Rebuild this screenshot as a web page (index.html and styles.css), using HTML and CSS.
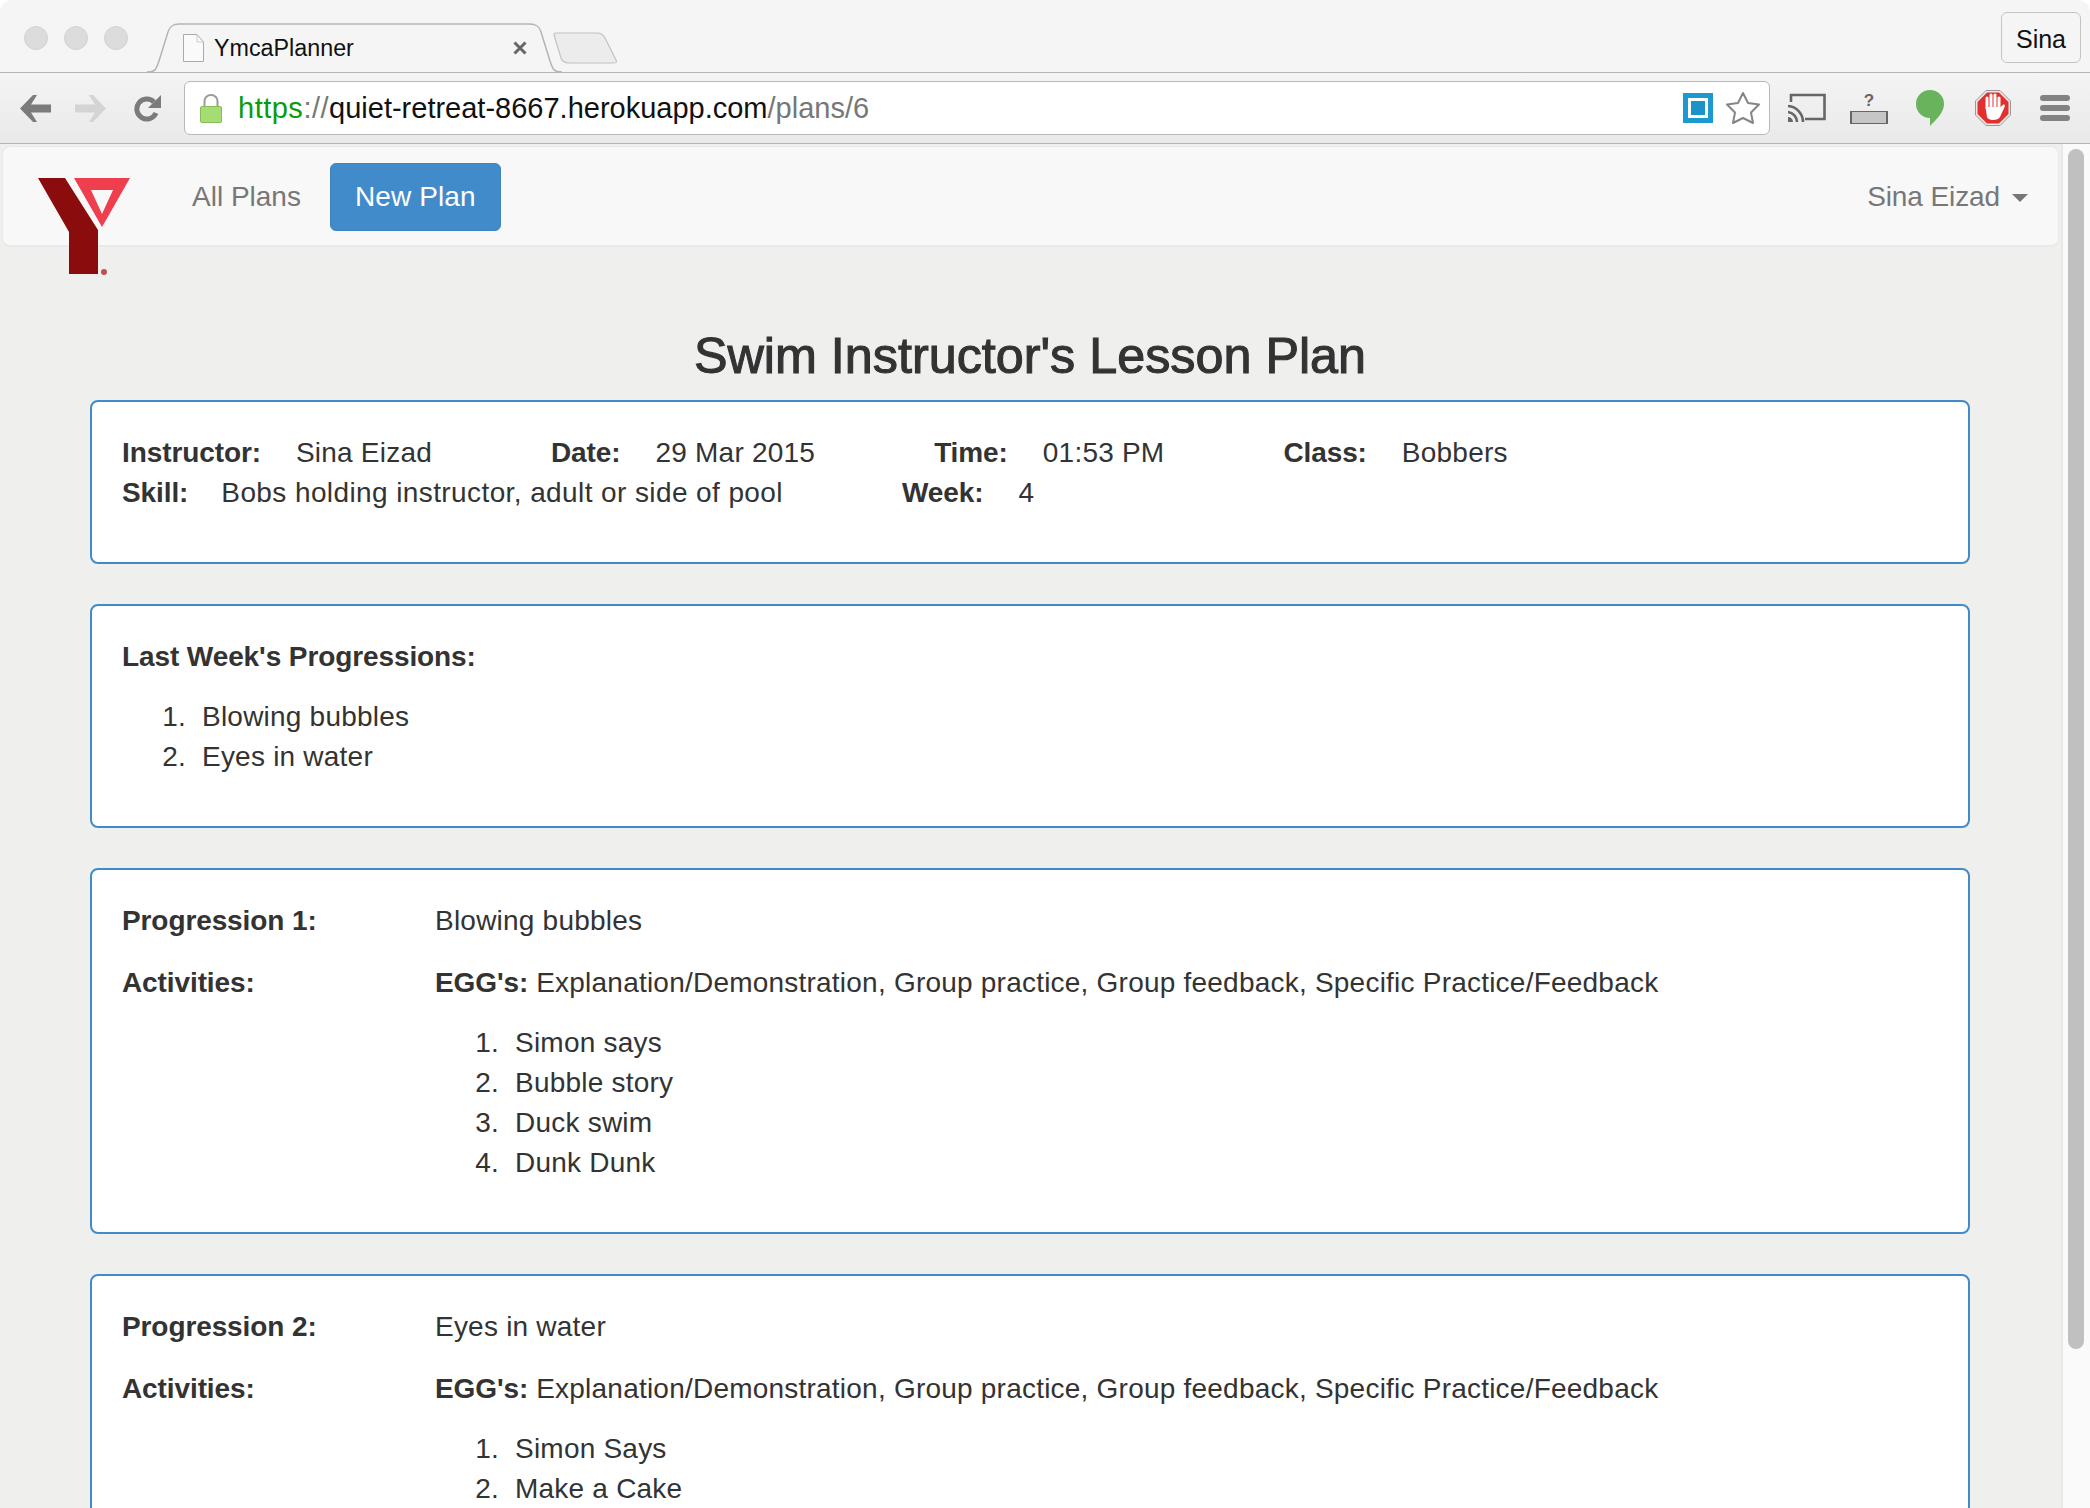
FILE: index.html
```html
<!DOCTYPE html>
<html lang="en">
<head>
  <meta charset="UTF-8" />
  <title>YmcaPlanner</title>
  <link rel="stylesheet" href="styles.css">
</head>
<body>

<div class="window">
  <div class="tabstrip">
    <div class="lights"><span></span><span></span><span></span></div>
    <div class="tab">
      <svg class="tab-shape" viewBox="0 0 415 50" width="415" height="50">
        <path d="M0 49 C8 49 9 47 12 38 L21 9 C23 3 26 1 32 1 H383 C389 1 392 3 394 9 L403 38 C406 47 407 49 415 49" fill="#f5f5f5" stroke="#b4b4b4" stroke-width="1.5"/>
      </svg>
      <svg class="file-icon" viewBox="0 0 21 28" width="21" height="28">
        <path d="M.5.5 H14 L20.5 8 V27.5 H.5 Z" fill="#fafafa" stroke="#aaa"/>
        <path d="M14 .5 V8 H20.5" fill="none" stroke="#ccc"/>
      </svg>
      <span class="tab-title">YmcaPlanner</span>
      <svg class="tab-close" viewBox="0 0 14 14" width="14" height="14">
        <path d="M1.5 1.5 L12.5 12.5 M12.5 1.5 L1.5 12.5" stroke="#666" stroke-width="3"/>
      </svg>
    </div>
    <svg class="new-tab" viewBox="0 0 64 32" width="64" height="32">
      <path d="M1 3 C1 1 2 1 4 1 H44 C48 1 50 2 52 6 L63 28 C64 31 63 31 60 31 H16 C11 31 9 29 8 26 Z" fill="#ececec" stroke="#c2c2c2" stroke-width="1.2"/>
    </svg>
    <div class="profile">Sina</div>
  </div>

  <div class="toolbar">
    <svg class="tool-back" viewBox="0 0 31 27" width="31" height="27">
      <path d="M0 13.5 L13 0 H17 L11 9.5 H31 V17.5 H11 L17 27 H13 Z" fill="#7b7b7b"/>
    </svg>
    <svg class="tool-forward" viewBox="0 0 31 27" width="31" height="27">
      <path d="M31 13.5 L18 0 H14 L20 9.5 H0 V17.5 H20 L14 27 H18 Z" fill="#d4d4d4"/>
    </svg>
    <svg class="tool-reload" viewBox="0 0 27 28" width="27" height="28">
      <path d="M20 8 A10 10 0 1 0 22 19" fill="none" stroke="#7b7b7b" stroke-width="5"/>
      <path d="M27 1 V14 H14 Z" fill="#7b7b7b"/>
    </svg>
    <div class="omnibox">
      <svg class="lock" viewBox="0 0 22 29" width="22" height="29">
        <path d="M4.5 13 V7 A6.5 6 0 0 1 17.5 7 V13" fill="none" stroke="#9a9a9a" stroke-width="2"/>
        <rect x=".5" y="12.5" width="21" height="16" rx="1.5" fill="#a6dc74" stroke="#86bd58"/>
      </svg>
      <div class="url"><span class="url-scheme">https</span><span class="url-dim url-sep">://</span>quiet-retreat-8667.herokuapp.com<span class="url-dim">/plans/6</span></div>
      <div class="ext-square"><span></span></div>
      <svg class="star" viewBox="0 0 36 34" width="36" height="34">
        <path d="M18 2 L23 12 L34 13.5 L26 21.5 L28 32 L18 27 L8 32 L10 21.5 L2 13.5 L13 12 Z" fill="#fff" stroke="#858585" stroke-width="2" stroke-linejoin="round"/>
      </svg>
    </div>
    <svg class="tool-cast" viewBox="0 0 38 30" width="38" height="30">
      <path d="M3 9 V2 H36.5 V26 H17" fill="none" stroke="#666" stroke-width="2.6"/>
      <path d="M0 13 A16 16 0 0 1 15 29 M0 19 A10 10 0 0 1 9 29" fill="none" stroke="#666" stroke-width="2.6"/>
      <path d="M0 24 A5 5 0 0 1 5 29 H0 Z" fill="#666"/>
    </svg>
    <div class="tool-bar-icon">
      <span class="q-mark">?</span>
      <span class="q-bar"></span>
    </div>
    <svg class="tool-bubble" viewBox="0 0 28 36" width="28" height="36">
      <path d="M14 0 A14 14 0 0 1 28 14 C28 22 21 29 14 36 V28 A14 14 0 0 1 14 0 Z" fill="#69b35c"/>
    </svg>
    <svg class="tool-stop" viewBox="0 0 36 36" width="36" height="36">
      <path d="M11 .5 H25 L35.5 11 V25 L25 35.5 H11 L.5 25 V11 Z" fill="#e8e8e8" stroke="#999"/>
      <path d="M12 2.5 H24 L33.5 12 V24 L24 33.5 H12 L2.5 24 V12 Z" fill="#e4302c"/>
      <path d="M12 18 V8 M16 18 V5 M20 18 V5 M24 18 V8" stroke="#fff" stroke-width="3" stroke-linecap="round"/>
      <path d="M10.5 17 H25.5 L29 14 L30 16 L25 27 C23 31 13 31 12 27 Z" fill="#fff"/>
    </svg>
    <div class="tool-menu"><span></span><span></span><span></span></div>
  </div>

  <div class="viewport">
    <div class="page">
      <nav class="navbar">
        <svg class="logo" viewBox="0 0 92 98" width="92" height="98">
          <path d="M0 0 H27 L60 52 V96 H31 V54 Z" fill="#8b0c0c"/>
          <path d="M36 0 H92 L64 49 Z M53 12 L64 36 L75 12 Z" fill="#ef3e4e" fill-rule="evenodd"/>
          <circle cx="66" cy="94" r="3" fill="#c05050"/>
        </svg>
        <a class="nav-link">All Plans</a>
        <a class="nav-btn">New Plan</a>
        <a class="nav-user">Sina Eizad<span class="caret"></span></a>
      </nav>

      <h3 class="page-title">Swim Instructor's Lesson Plan</h3>

      <section class="panel">
        <p class="info">
          <span class="field"><b>Instructor:</b><span>Sina Eizad</span></span>
          <span class="field"><b>Date:</b><span>29 Mar 2015</span></span>
          <span class="field"><b>Time:</b><span>01:53 PM</span></span>
          <span class="field"><b>Class:</b><span>Bobbers</span></span>
          <br>
          <span class="field field-skill"><b>Skill:</b><span>Bobs holding instructor, adult or side of pool</span></span>
          <span class="field"><b>Week:</b><span>4</span></span>
        </p>
      </section>

      <section class="panel">
        <p><b>Last Week's Progressions:</b></p>
        <ol>
          <li>Blowing bubbles</li>
          <li>Eyes in water</li>
        </ol>
      </section>

      <section class="panel prog">
        <b>Progression 1:</b>
        <p>Blowing bubbles</p>
        <b>Activities:</b>
        <div>
          <p><b>EGG's:</b> Explanation/Demonstration, Group practice, Group feedback, Specific Practice/Feedback</p>
          <ol>
            <li>Simon says</li>
            <li>Bubble story</li>
            <li>Duck swim</li>
            <li>Dunk Dunk</li>
          </ol>
        </div>
      </section>

      <section class="panel prog">
        <b>Progression 2:</b>
        <p>Eyes in water</p>
        <b>Activities:</b>
        <div>
          <p><b>EGG's:</b> Explanation/Demonstration, Group practice, Group feedback, Specific Practice/Feedback</p>
          <ol>
            <li>Simon Says</li>
            <li>Make a Cake</li>
          </ol>
        </div>
      </section>
    </div>
    <div class="scrollbar"><div class="thumb"></div></div>
  </div>
</div>

</body>
</html>
```

FILE: styles.css
```css
* {
  box-sizing: border-box;
}
html, body {
  margin: 0;
  height: 100%;
  overflow: hidden;
  background: #fff;
}
body {
  font-family: "Liberation Sans", Arial, sans-serif;
  font-size: 28px;
  line-height: 40px;
  color: #333;
}

.window {
  height: 100%;
  display: flex;
  flex-direction: column;
  border-radius: 12px 12px 0 0;
  overflow: hidden;
}

/* Tab strip */
.tabstrip {
  height: 73px;
  flex: none;
  display: flex;
  align-items: flex-start;
  background: #f5f5f5;
  border-bottom: 1.5px solid #b4b4b4;
  padding-left: 24px;
  padding-right: 9px;
}
.lights {
  display: flex;
  gap: 16px;
  margin-top: 26px;
}
.lights span {
  width: 24px;
  height: 24px;
  border-radius: 50%;
  background: #dcdcdc;
  border: 1px solid #d2d2d2;
}
.tab {
  position: relative;
  width: 415px;
  height: 50px;
  margin-top: 23px;
  margin-left: 19px;
  display: flex;
  align-items: center;
  padding-left: 36px;
  z-index: 1;
}
.tab-shape {
  position: absolute;
  left: 0;
  top: 0;
}
.file-icon, .tab-title, .tab-close {
  position: relative;
}
.tab-title {
  margin-left: 10px;
  font-size: 23.3px;
  color: #111;
}
.tab-close {
  margin-left: auto;
  margin-right: 35px;
}
.new-tab {
  margin-top: 32px;
  margin-left: -9px;
}
.profile {
  margin-top: 12px;
  margin-left: auto;
  width: 80px;
  height: 51px;
  border: 1px solid #c4c4c4;
  border-radius: 6px;
  text-align: center;
  line-height: 52px;
  font-size: 25px;
  color: #111;
}

/* Toolbar */
.toolbar {
  height: 71px;
  flex: none;
  display: flex;
  align-items: center;
  padding: 0 20px;
  background: linear-gradient(#f4f4f4, #e9e9e9);
  border-bottom: 1.5px solid #b4b4b4;
}
.tool-forward {
  margin-left: 24px;
}
.tool-reload {
  margin-left: 28px;
}
.omnibox {
  flex: 1;
  height: 54px;
  margin-left: 23px;
  display: flex;
  align-items: center;
  padding: 0 8px 0 15px;
  background: #fff;
  border: 1.5px solid #b8b8b8;
  border-radius: 6px;
}
.url {
  flex: 1;
  margin-left: 16px;
  font-size: 29px;
  color: #111;
  white-space: nowrap;
}
.url-scheme {
  color: #0b9b0b;
  letter-spacing: 0.5px;
}
.url-dim {
  color: #777;
}
.url-sep {
  letter-spacing: 0.5px;
}
.ext-square {
  width: 30px;
  height: 30px;
  border: 5px solid #1b9ad2;
  padding: 3px;
  background: #fff;
}
.ext-square span {
  display: block;
  height: 100%;
  background: #1b93c8;
}
.star {
  margin-left: 12px;
}
.tool-cast {
  margin-left: 18px;
}
.tool-bar-icon {
  width: 38px;
  height: 32px;
  margin-left: 24px;
  display: flex;
  flex-direction: column;
  align-items: center;
  justify-content: space-between;
}
.q-mark {
  font-size: 17px;
  line-height: 18px;
  font-weight: bold;
  color: #666;
}
.q-bar {
  width: 38px;
  height: 13px;
  background: #c6c6c6;
  border: 2px solid #666;
  border-top-width: 1.5px;
  border-bottom-width: 1.5px;
}
.tool-bubble {
  margin-left: 28px;
}
.tool-stop {
  margin-left: 31px;
}
.tool-menu {
  margin-left: 29px;
  width: 30px;
  display: flex;
  flex-direction: column;
  gap: 4px;
}
.tool-menu span {
  height: 6px;
  border-radius: 3px;
  background: #828282;
}

/* Page */
.viewport {
  flex: 1;
  min-height: 0;
  display: flex;
  overflow: hidden;
}
.page {
  flex: 1;
  min-width: 0;
  overflow: hidden;
  background: #efefee;
  padding: 2px 91px 0 90px;
}
.navbar {
  position: relative;
  height: 101px;
  margin: 0 -89px 0 -88px;
  display: flex;
  align-items: center;
  background: #f8f8f8;
  border: 1px solid #e9e9e9;
  border-bottom-width: 2px;
  border-radius: 8px;
  padding: 1px 30px 0 189px;
}
.logo {
  position: absolute;
  left: 35px;
  top: 31px;
}
.nav-link {
  color: #777;
}
.nav-btn {
  margin-left: 29px;
  padding: 13px 24px;
  color: #fff;
  background: #428bca;
  border: 1px solid #3f83bd;
  border-radius: 6px;
  letter-spacing: 0.1px;
}
.nav-user {
  margin-left: auto;
  color: #777;
  letter-spacing: -0.1px;
}
.caret {
  display: inline-block;
  margin-left: 12px;
  vertical-align: middle;
  border-top: 8px solid #777;
  border-left: 8px solid transparent;
  border-right: 8px solid transparent;
}
.page-title {
  margin: 82px 0 18px;
  text-align: center;
  font-size: 50.3px;
  font-weight: normal;
  line-height: 53px;
  -webkit-text-stroke: 1.1px #333;
}
.panel {
  padding: 31px 30px 29px;
  margin-bottom: 40px;
  background: #fff;
  border: 2px solid #428bca;
  border-radius: 8px;
  letter-spacing: 0.22px;
}
.panel b {
  letter-spacing: -0.1px;
}
.panel p {
  margin: 0 0 20px;
}
.panel ol {
  margin: 0 0 20px;
  padding-left: 80px;
}
.panel li::marker {
  content: counter(list-item) ".  ";
}
.field b {
  margin-right: 35px;
}
.field > span {
  margin-right: 111px;
}
.field-skill b {
  margin-right: 33px;
}
.field-skill > span {
  letter-spacing: 0.4px;
}
.prog {
  display: grid;
  grid-template-columns: 313px 1fr;
}
.prog > p {
  margin-bottom: 22px;
}
.prog > div {
  min-width: 0;
}

/* Fake scrollbar */
.scrollbar {
  flex: none;
  width: 29px;
  background: #fafafa;
  border-left: 2px solid #e8e8e8;
  padding: 5px 6px 0 5px;
}
.thumb {
  height: 1200px;
  background: #c0c0c0;
  border-radius: 8px;
}
```
